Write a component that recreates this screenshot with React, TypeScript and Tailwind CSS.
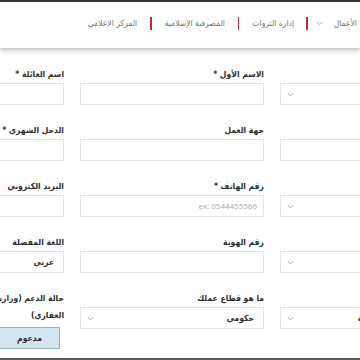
import React from "react";

const Chevron = () => (
  <svg width="7" height="5" viewBox="0 0 7 5" className="shrink-0">
    <path d="M0.6 0.9 L3.5 3.8 L6.4 0.9" fill="none" stroke="#9c9c9c" strokeWidth="0.9" />
  </svg>
);

type Field = {
  label: React.ReactNode;
  kind: "input" | "select" | "button";
  value?: string;
  placeholder?: string;
  twoLine?: boolean;
  farValue?: boolean;
};

const rows: Field[][] = [
  [
    { label: "", kind: "select" },
    { label: "الاسم الأول *", kind: "input" },
    { label: "اسم العائلة *", kind: "input" },
  ],
  [
    { label: "", kind: "input" },
    { label: "جهة العمل", kind: "input" },
    { label: "الدخل الشهري *", kind: "input" },
  ],
  [
    { label: "", kind: "select" },
    { label: "رقم الهاتف *", kind: "input", placeholder: "ex: 0544455566" },
    { label: "البريد الكتروني", kind: "input" },
  ],
  [
    { label: "", kind: "select" },
    { label: "رقم الهوية", kind: "input" },
    { label: "اللغة المفضلة", kind: "input", value: "عربي" },
  ],
  [
    { label: "", kind: "select", value: "المملكة العربية السعودية", farValue: true },
    { label: "ما هو قطاع عملك", kind: "select", value: "حكومي" },
    {
      label: (
        <>
          حالة الدعم (وزارة الإسكان، صندوق التنمية
          <br />
          العقاري)
        </>
      ),
      kind: "button",
      value: "مدعوم",
      twoLine: true,
    },
  ],
];

function FieldView({ f }: { f: Field }) {
  return (
    <div className="flex flex-col">
      {f.twoLine ? (
        <div className="text-[8.5px] leading-[17px] font-bold text-[#2f2f2f] whitespace-nowrap mb-[3px] -mt-[1px]">
          {f.label}
        </div>
      ) : (
        <div className="text-[8.5px] leading-[14px] h-[14px] font-bold text-[#2f2f2f] whitespace-nowrap mb-[2px]">
          {f.label}
        </div>
      )}
      {f.kind === "button" ? (
        <div className="flex">
          <div className="mr-[4px] w-[61px] h-[22px] flex items-center justify-center bg-[#d4e6f1] border border-[#8eb3c9] text-[8.5px] font-bold text-[#2f2f2f]">
            {f.value}
          </div>
        </div>
      ) : (
        <div className="h-[22px] border border-[#e4e4e4] bg-white flex items-center justify-between px-[6px]">
          {f.placeholder ? (
            <span className="text-[8px] text-[#a8a8a8]" style={{ fontFamily: '"Open Sans", sans-serif' }}>
              <span dir="ltr">{f.placeholder}</span>
            </span>
          ) : f.value ? (
            <span
              className={
                f.farValue
                  ? "text-[8.5px] font-bold text-[#333] pr-[7px] whitespace-nowrap"
                  : "text-[8.5px] font-bold text-[#333] pr-[3px] whitespace-nowrap"
              }
            >
              {f.value}
            </span>
          ) : (
            <span />
          )}
          {f.kind === "select" ? <Chevron /> : null}
        </div>
      )}
    </div>
  );
}

export default function App() {
  return (
    <div
      className="w-[360px] h-[360px] overflow-hidden relative bg-white"
      style={{ fontFamily: '"DejaVu Sans Condensed", "DejaVu Sans", sans-serif' }}
    >
      <div className="h-[2px] bg-[#3a3a3a]" />
      <header className="relative z-10 h-[46px] bg-white shadow-[0_2px_5px_rgba(0,0,0,0.28)]">
        <nav dir="rtl" className="flex items-center h-[42px] pr-[3px] text-[8.5px] text-[#757575] whitespace-nowrap">
          <span>الأعمال</span>
          <span className="mr-[11px]">
            <Chevron />
          </span>
          <span className="mr-[8px] ml-[12px] w-[1.5px] h-[13px] bg-[#c0283f]" />
          <span>إدارة الثروات</span>
          <span className="mx-[13px] w-[1.5px] h-[13px] bg-[#c0283f]" />
          <span>المصرفية الإسلامية</span>
          <span className="mx-[13px] w-[1.5px] h-[13px] bg-[#c0283f]" />
          <span>المركز الاعلامي</span>
        </nav>
      </header>
      <div className="pt-[19px]">
        <div dir="rtl" className="w-[584px] ml-[-120px] flex flex-col gap-y-[18px]">
          {rows.map((r, i) => (
            <div key={i} className="grid grid-cols-[184px_184px_184px] gap-x-[16px] items-start">
              {r.map((f, j) => (
                <FieldView key={j} f={f} />
              ))}
            </div>
          ))}
        </div>
      </div>
      <div className="absolute left-0 right-0 bottom-0 h-[2px] bg-[#5a5a5a]" />
    </div>
  );
}
